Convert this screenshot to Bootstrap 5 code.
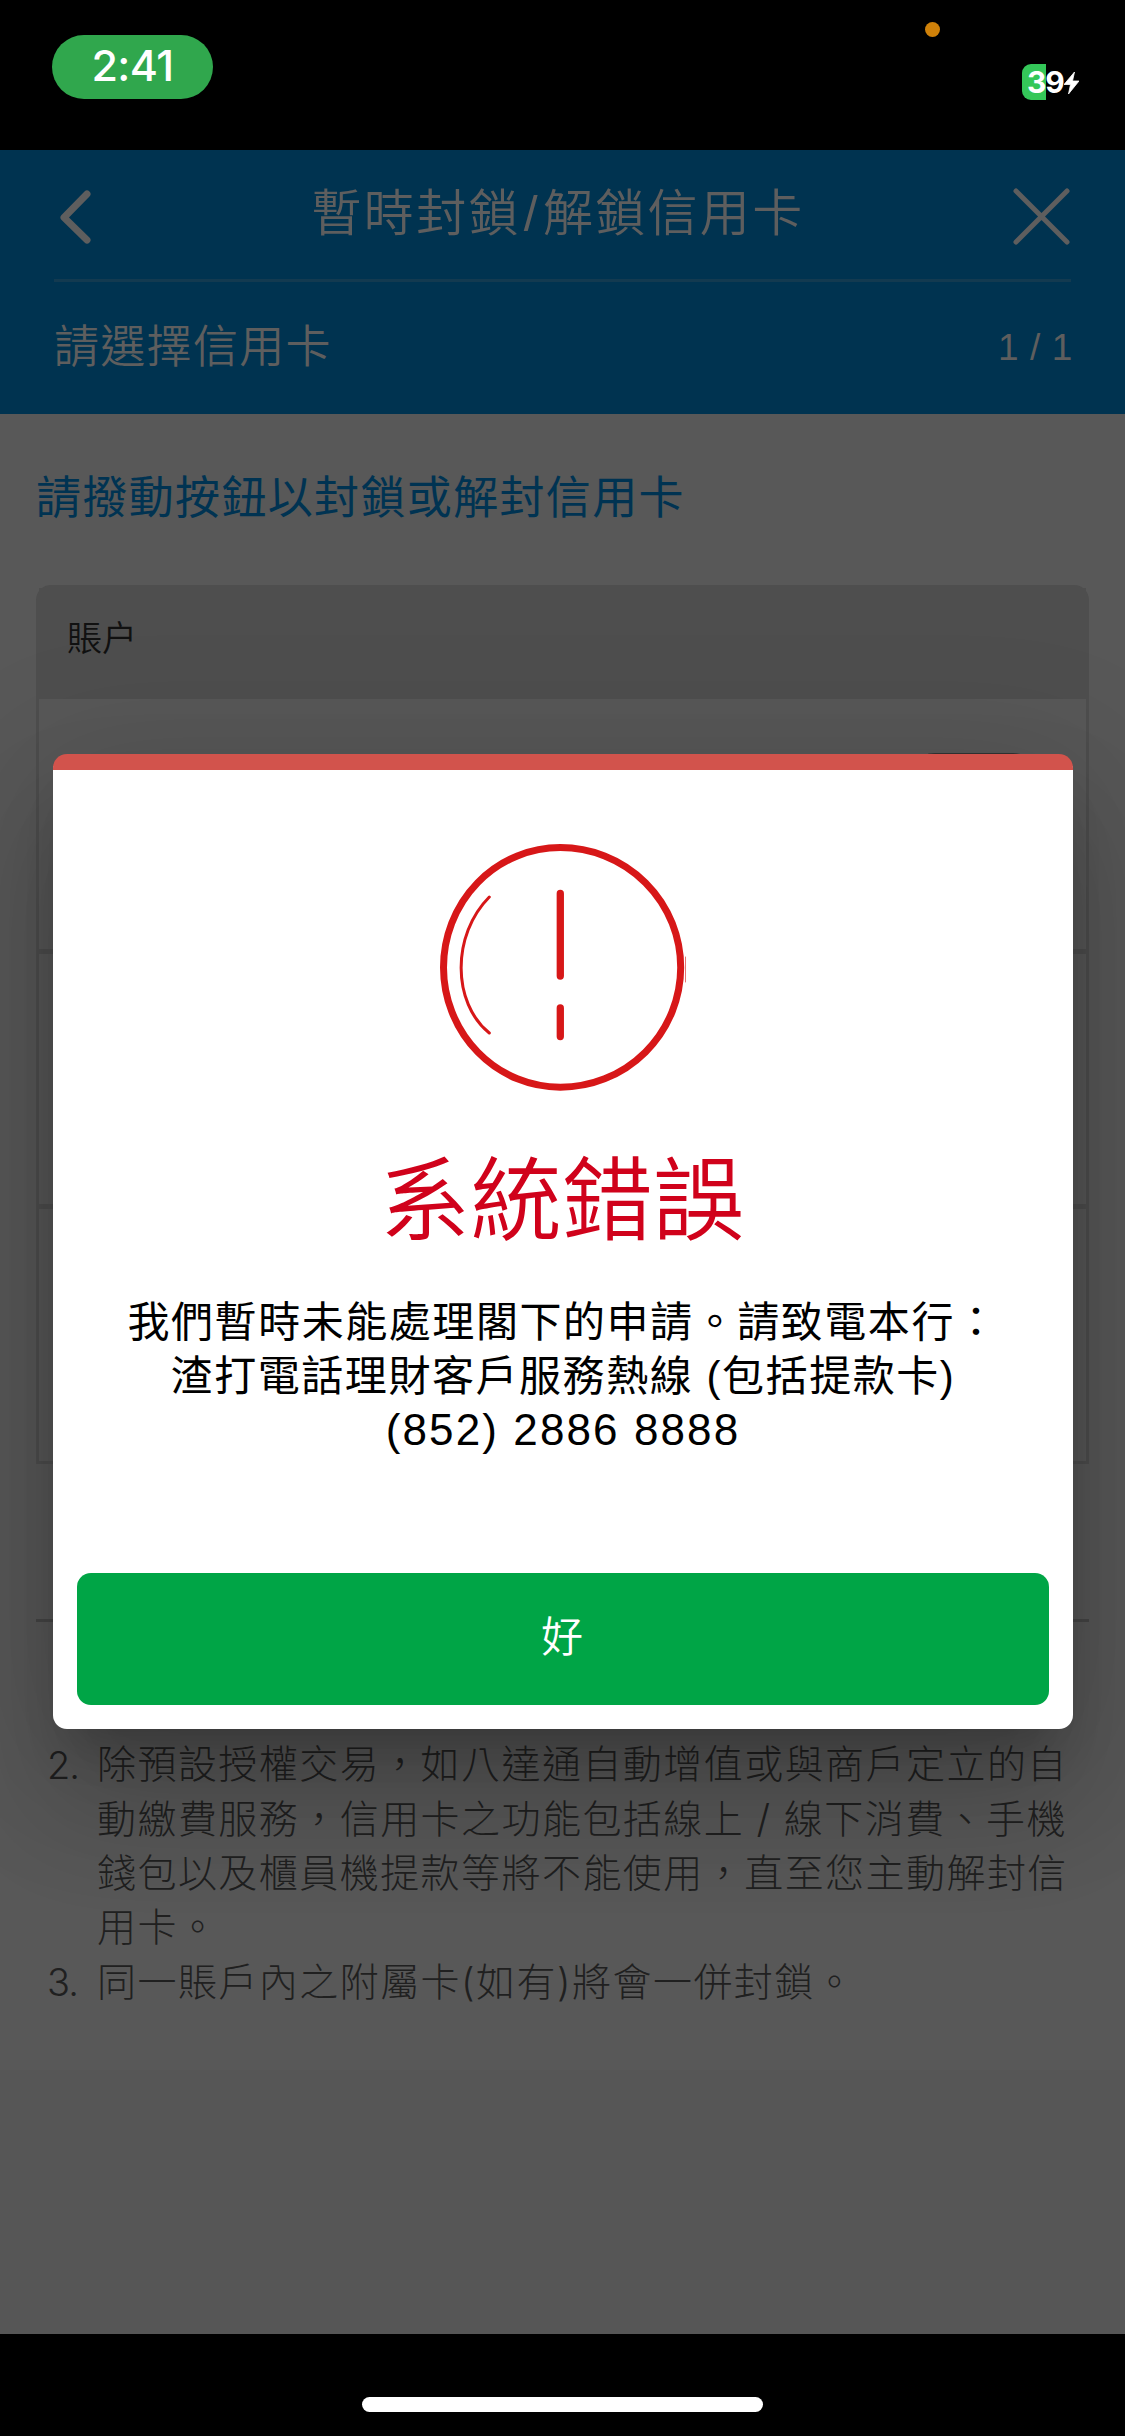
<!DOCTYPE html>
<html lang="zh-Hant">
<head>
<meta charset="utf-8">
<meta name="viewport" content="width=device-width, initial-scale=1">
<title>暫時封鎖/解鎖信用卡</title>
<link href="https://cdn.jsdelivr.net/npm/bootstrap@5.3.0/dist/css/bootstrap.min.css" rel="stylesheet">
<style>
body{margin:0;background:#000;font-family:"Liberation Sans","Noto Sans CJK TC",sans-serif;width:1125px;height:2436px;overflow:hidden;position:relative}
svg{display:block}
.thin{font-family:"Liberation Sans","Noto Sans CJK TC",sans-serif;font-weight:350;white-space:nowrap}
.fine{font-family:Inter,"Liberation Sans",sans-serif;font-weight:300}
.status-bar{height:150px;padding:35px 43px 0 52px;font-family:Inter,sans-serif;color:#fff}
.clock-pill{width:161px;height:64px;border-radius:32px;background:#30a74d;font-size:43px;font-weight:500;line-height:61px;letter-spacing:-.6px}
.rec-dot{width:15px;height:15px;border-radius:50%;background:#cf8109;left:925px;top:22px}
.battery{height:36px;margin-top:29px;width:60px;background:linear-gradient(90deg,#34c759 24px,#000 24px);border-radius:9px 0 0 9px;font-size:30px;font-weight:700;line-height:36px;padding-left:5px;letter-spacing:-1px}
.app-head{height:264px;background:#003350;color:#5e5e5e;padding:0 54px}
.head-top{height:129px;padding:4px 1px 0 5px}
.head-title{font-size:50px;letter-spacing:2.3px;margin:-4px 0 0 12px}
.head-title span{margin:0 3px 0 3px}
.head-line{height:3px;background:#133a50}
.head-sub{height:131px;font-size:45px;letter-spacing:1.3px}
.step-no{font-size:37px;letter-spacing:.6px;margin-right:-2px}
.app-body{height:1920px;background:linear-gradient(#585858 1656px,#565656 1656px);padding:0 36px}
.hint{font-size:45px;letter-spacing:1.35px;color:#003352;line-height:60px;padding-top:55px;height:171px;font-weight:400}
.acct{border:3px solid #4e4e4e;border-radius:15px 15px 0 0;height:879px}
.acct-head{background:#4e4e4e;height:111px;font-size:35px;color:#111;padding:25px 0 0 28px;line-height:52px}
.acct-row{height:255px;border-bottom:5px solid #4e4e4e;padding:54px 43px}
.switch-pill{width:138px;height:60px;border-radius:30px;background:#333;margin-left:auto}
.rule{height:3px;background:#464646;margin-top:155px}
.notes{margin:62px 0 0;font-size:39px;line-height:54px;letter-spacing:1.45px;color:#202020;padding:54px 0 0 11px;font-weight:300}
.note-no{width:50px;letter-spacing:-1px;font-size:38px}
.alert-box{left:53px;top:754px;width:1020px;height:975px;border-radius:14px;border-top:16px solid #d2534c;background:#fff;box-shadow:0 33px 45px -21px rgba(0,0,0,.2),0 72px 114px 9px rgba(0,0,0,.14),0 27px 138px 24px rgba(0,0,0,.12);padding:0 24px}
.alert-svg{width:260px;height:260px;margin:68px auto 0}
.alert-name{font-size:91px;letter-spacing:.3px;color:#d0021b;line-height:120px;margin:44px 2px 0 0}
.alert-text{font-size:42px;letter-spacing:1.55px;color:#000;line-height:54px;margin-top:34px;white-space:nowrap}
.lat{letter-spacing:2.1px;font-size:44px;line-height:1}
.ok-btn,.ok-btn:hover{background:#00a546;color:#fff;border:0;border-radius:14px;height:132px;width:972px;font-size:42px;line-height:56px;margin-top:115px;padding:0 2px 3px 0}
.home-bar{width:401px;height:15px;border-radius:8px;background:#fff;margin-top:63px}
</style>
</head>
<body>
<header class="status-bar d-flex justify-content-between align-items-start">
  <div class="clock-pill text-center">2:41</div>
  <span class="rec-dot position-absolute"></span>
  <div class="battery d-flex">39<svg width="15" height="22" viewBox="0 0 15 22" class="mt-2 flex-shrink-0"><path d="M10.500 0L0 12.500h6.500L4.500 22 15 9H8.500z" fill="#fff" stroke="#fff" stroke-width=".8"/></svg></div>
</header>
<section class="app-head">
  <div class="head-top d-flex justify-content-between align-items-center">
    <svg width="32" height="56" viewBox="0 0 32 56"><path d="M28 5L5 28.500 28 51" fill="none" stroke="#5e5e5e" stroke-width="7" stroke-linecap="round" stroke-linejoin="round"/></svg>
    <div class="head-title thin">暫時封鎖<span>/</span>解鎖信用卡</div>
    <svg width="57" height="57" viewBox="0 0 57 57"><path d="M3 3l51 51M54 3L3 54" stroke="#5e5e5e" stroke-width="5" stroke-linecap="round"/></svg>
  </div>
  <div class="head-line"></div>
  <div class="head-sub thin d-flex justify-content-between align-items-center"><span>請選擇信用卡</span><span class="step-no">1 / 1</span></div>
</section>
<main class="app-body">
  <div class="hint thin">請撥動按鈕以封鎖或解封信用卡</div>
  <div class="acct">
    <div class="acct-head thin">賬户</div>
    <div class="acct-row"><div class="switch-pill"></div></div>
    <div class="acct-row"></div>
  </div>
  <div class="rule"></div>
  <div class="notes text-nowrap">
    <div class="d-flex"><span class="note-no fine">2.</span><span>除預設授權交易，如八達通自動增值或與商戶定立的自<br>動繳費服務，信用卡之功能包括線上 <span class="fine">/</span> 線下消費、手機<br>錢包以及櫃員機提款等將不能使用，直至您主動解封信<br>用卡。</span></div>
    <div class="d-flex"><span class="note-no fine">3.</span><span>同一賬戶內之附屬卡<span class="fine">(</span>如有<span class="fine">)</span>將會一併封鎖。</span></div>
  </div>
</main>
<div class="alert-box position-absolute text-center" role="alertdialog">
  <svg class="alert-svg" viewBox="433 838 260 260"><g fill="none" stroke="#d71718" stroke-linecap="round"><path d="M560.300 847.500A120.400 120 0 0 1 680.700 967.500A120.400 120 0 0 1 560.300 1087.200A116.800 120 0 0 1 443.500 967.500A116.800 120 0 0 1 560.300 847.500Z" stroke-width="7"/><path d="M489.300 897C451.500 935 452 1003 489.300 1033" stroke-width="3"/><path d="M560.300 893.500V976M560.300 1008V1036.500" stroke-width="7.300"/><path d="M685.500 957V982" stroke-width="1" opacity=".6"/></g></svg>
  <div class="alert-name thin">系統錯誤</div>
  <div class="alert-text">我們暫時未能處理閣下的申請。請致電本行：<br>渣打電話理財客戶服務熱線 (包括提款卡)<br><span class="lat">(852) 2886 8888</span></div>
  <button type="button" class="btn ok-btn thin">好</button>
</div>
<footer class="d-flex justify-content-center"><div class="home-bar"></div></footer>
<script src="https://cdn.jsdelivr.net/npm/bootstrap@5.3.0/dist/js/bootstrap.bundle.min.js"></script>
</body>
</html>
